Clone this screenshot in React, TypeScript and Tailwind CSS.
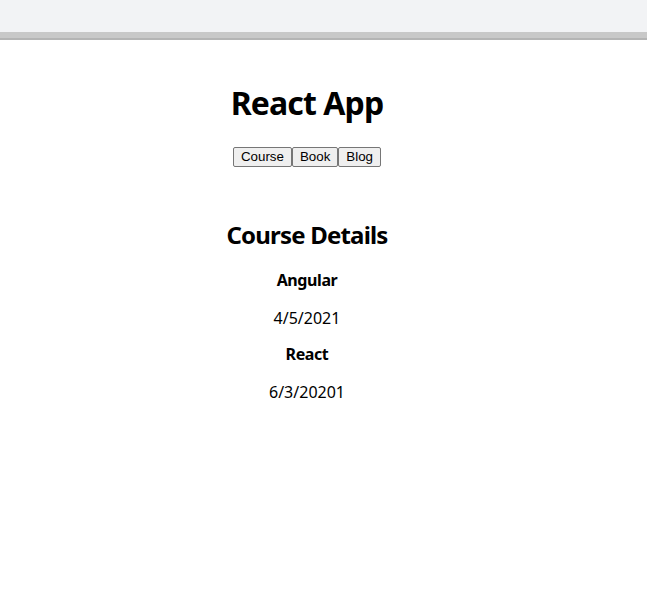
export default function App() {
  const courses = [
    { name: 'Angular', date: '4/5/2021' },
    { name: 'React', date: '6/3/20201' },
  ]
  return (
    <div className="min-h-screen bg-white text-black" style={{ fontFamily: '"Noto Sans", "Open Sans", sans-serif' }}>
      <div className="h-[32px] bg-[#f2f3f5]" />
      <div className="h-[6px] bg-[#c8c8c8]" />
      <div className="h-[2px] bg-[#b4b4b4]" />
      <div className="w-[614px] text-center">
        <h1 className="mt-[43px] text-[32px] leading-[40px] font-bold tracking-[-0.9px]">React App</h1>
        <div className="mt-[24px] flex justify-center" style={{ fontFamily: '"Liberation Sans", Arial, sans-serif' }}>
          {['Course', 'Book', 'Blog'].map(b => (
            <button
              key={b}
              className="h-[20px] px-[7px] text-[13.33px] leading-[16px] bg-[#efefef] border border-[#767676] rounded-[2px]"
            >
              {b}
            </button>
          ))}
        </div>
        <h2 className="mt-[52px] text-[24px] leading-[32px] font-bold tracking-[-0.8px]">Course Details</h2>
        <div className="mt-[18px]">
          {courses.map((c, i) => (
            <div key={c.name} className={i > 0 ? 'mt-[14px]' : ''}>
              <h4 className="text-[16px] leading-[22px] font-bold tracking-[-0.4px]">{c.name}</h4>
              <p className="mt-[16px] text-[16px] leading-[22px]">{c.date}</p>
            </div>
          ))}
        </div>
      </div>
    </div>
  )
}
